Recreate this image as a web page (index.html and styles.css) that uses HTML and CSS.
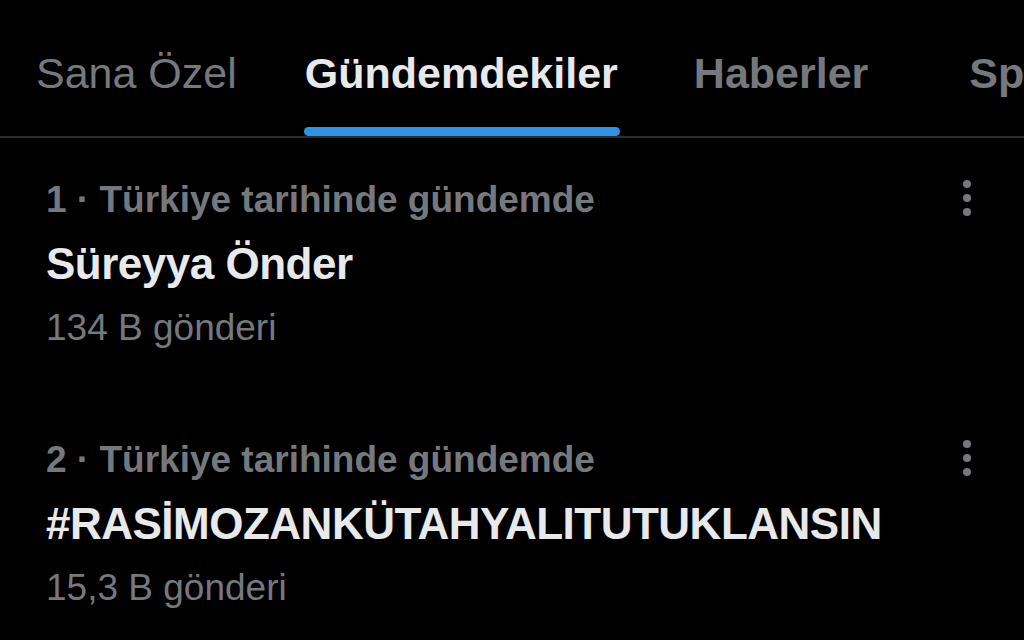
FILE: index.html
```html
<!DOCTYPE html>
<html lang="tr">
<head>
    <meta charset="UTF-8">
    <meta name="viewport" content="width=device-width, initial-scale=1.0">
    <title>Gündemdekiler</title>
    <link rel="stylesheet" href="styles.css">
</head>
<body>

    <!-- Sekmeler -->
    <nav class="sekmeler">
        <div class="sekme">Sana Özel</div>
        <div class="sekme aktif">Gündemdekiler</div>
        <div class="sekme">Haberler</div>
        <div class="sekme">Spor</div>
    </nav>

    <!-- Gündem listesi -->
    <div class="liste">
        <div class="gundem">
            <div class="metin">
                <div class="baslik-ust">1 · Türkiye tarihinde gündemde</div>
                <div class="baslik">Süreyya Önder</div>
                <div class="sayi">134 B gönderi</div>
            </div>
            <div class="menu"><span></span><span></span><span></span></div>
        </div>
        <div class="gundem">
            <div class="metin">
                <div class="baslik-ust">2 · Türkiye tarihinde gündemde</div>
                <div class="baslik">#RASİMOZANKÜTAHYALITUTUKLANSIN</div>
                <div class="sayi">15,3 B gönderi</div>
            </div>
            <div class="menu"><span></span><span></span><span></span></div>
        </div>
    </div>

</body>
</html>
```

FILE: styles.css
```css
body {
    margin: 0;
    background-color: #000;
    font-family: "Liberation Sans", Arial, sans-serif;
    color: #e7e9ea;
    overflow: hidden;
}
.sekmeler {
    display: flex;
    height: 136px;
    border-bottom: 2px solid #2a2d30;
    padding-left: 36px;
    white-space: nowrap;
    overflow: hidden;
}
.sekme {
    position: relative;
    font-size: 43px;
    color: #75797e;
    padding-top: 49px;
    margin-right: 72px;
}
.sekme:first-child {
    margin-right: 68px;
}
.sekme + .sekme {
    font-weight: 700;
}
.sekme.aktif {
    color: #e7e9ea;
    margin-right: 76px;
}
.sekme.aktif::after {
    content: "";
    position: absolute;
    left: -1px;
    right: -2px;
    bottom: 0;
    height: 9px;
    border-radius: 5px;
    background-color: #2d93e6;
}
.sekme:nth-child(3) {
    margin-right: 101px;
}
.liste {
    padding-left: 46px;
}
.gundem {
    display: flex;
    justify-content: space-between;
    padding-top: 42px;
    height: 218px;
    white-space: nowrap;
}
.baslik-ust {
    font-size: 37px;
    font-weight: 700;
    color: #75797e;
    line-height: 40px;
}
.baslik {
    font-size: 44px;
    font-weight: 700;
    letter-spacing: -0.5px;
    color: #e7e9ea;
    margin-top: 22px;
    line-height: 44px;
}
.sayi {
    font-size: 37px;
    color: #75797e;
    margin-top: 22px;
    line-height: 40px;
}
.menu {
    display: flex;
    flex-direction: column;
    gap: 6px;
    margin-right: 53px;
}
.menu span {
    width: 8px;
    height: 8px;
    border-radius: 50%;
    background-color: #75797e;
}
```
